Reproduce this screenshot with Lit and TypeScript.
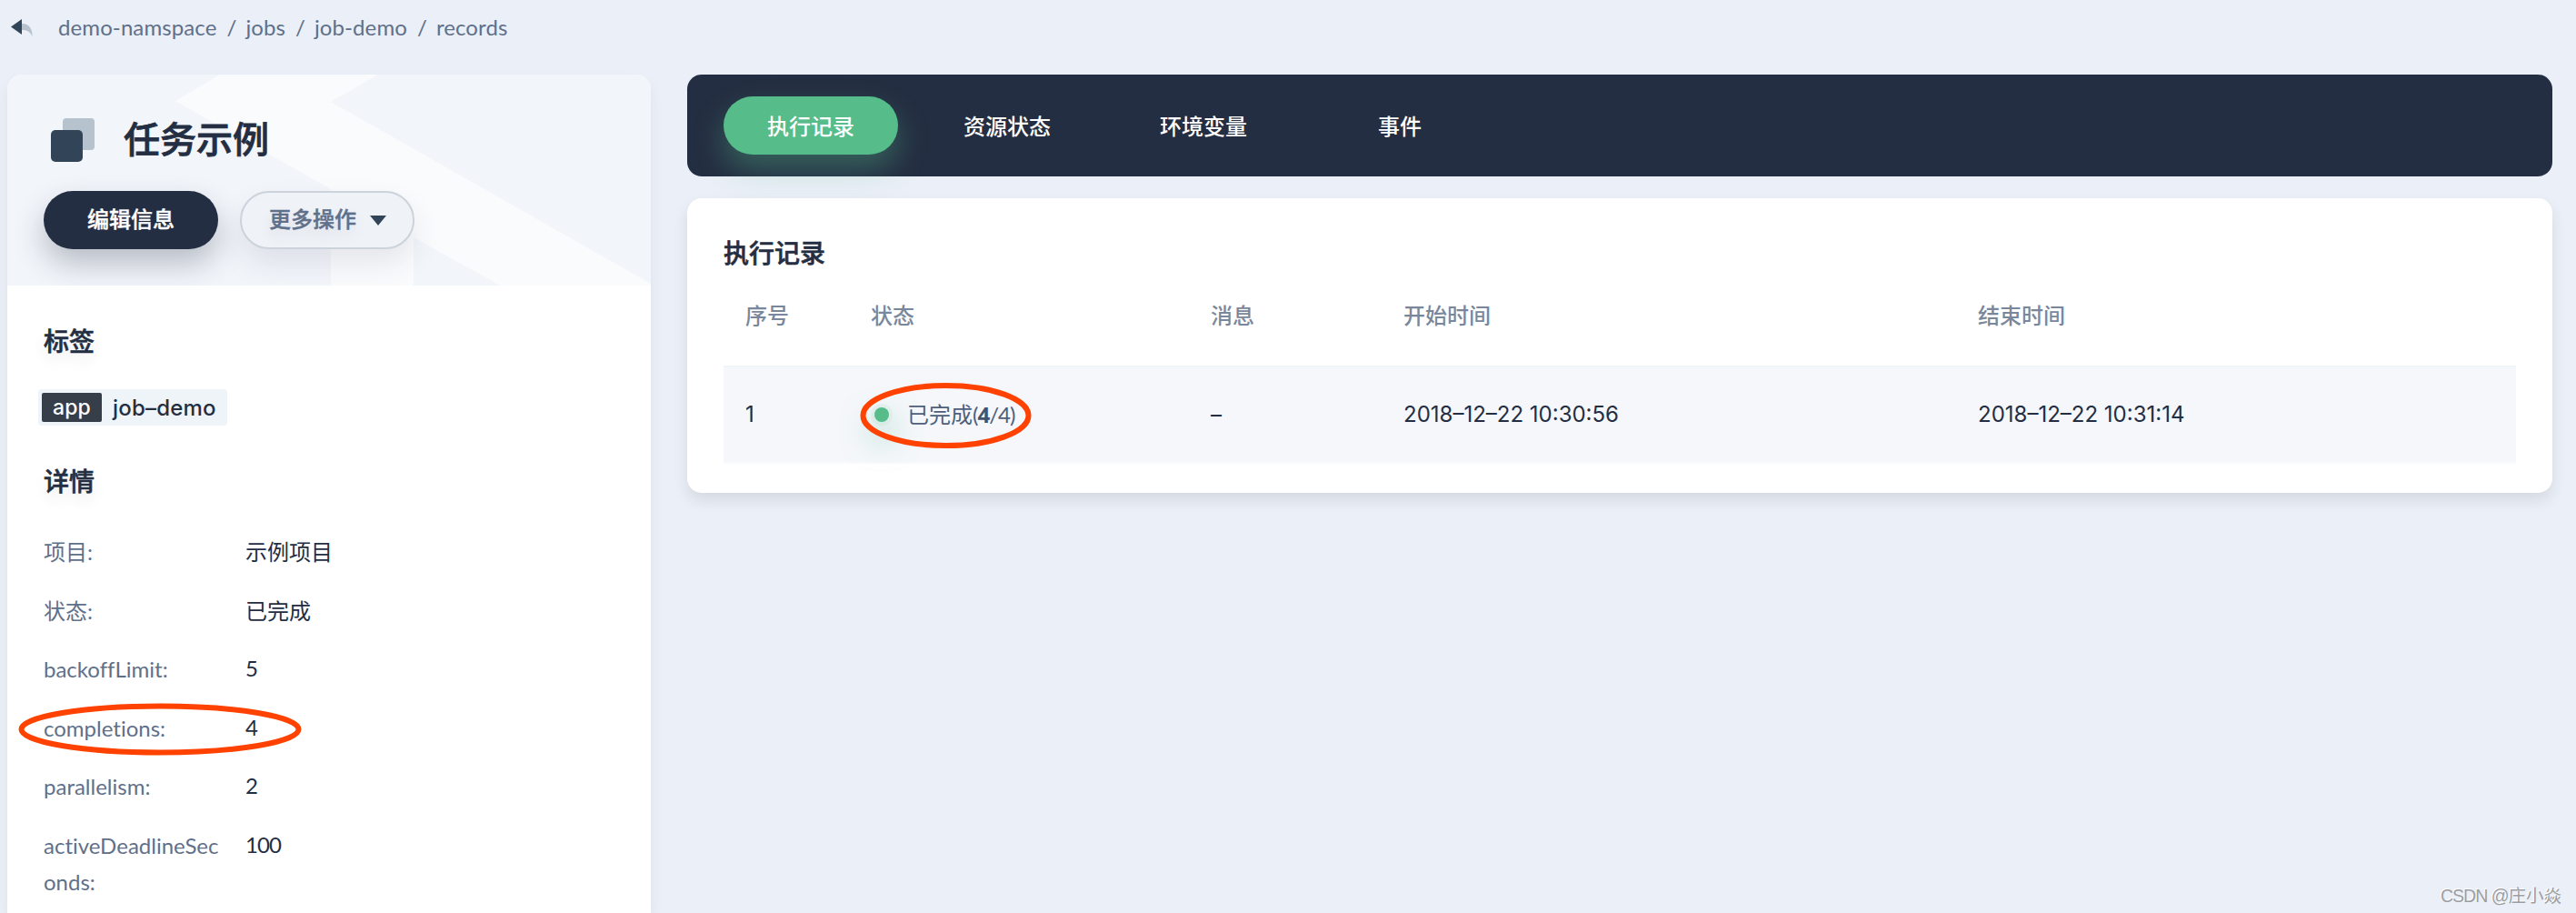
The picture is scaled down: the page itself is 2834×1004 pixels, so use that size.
import { LitElement, html, svg, css } from "lit";
import { customElement } from "lit/decorators.js";

const CRUMBS = ["demo-namspace", "jobs", "job-demo", "records"];
const TABS = ["执行记录", "资源状态", "环境变量", "事件"];
const DETAILS: { label: string; value: string; numeric?: boolean; marked?: boolean }[] = [
  { label: "项目:", value: "示例项目" },
  { label: "状态:", value: "已完成" },
  { label: "backoffLimit:", value: "5", numeric: true },
  { label: "completions:", value: "4", numeric: true, marked: true },
  { label: "parallelism:", value: "2", numeric: true },
  { label: "activeDeadlineSeconds:", value: "100", numeric: true },
];

@customElement("job-side-panel")
class JobSidePanel extends LitElement {
  static styles = css`
    :host { display: block; width: 708px; flex: none; }
    * { box-sizing: border-box; }
    .panel {
      height: 100%;
      background: #fff;
      border-radius: 16px 16px 0 0;
      box-shadow: 0 8px 16px rgba(36, 46, 66, 0.06);
    }
    .head {
      position: relative;
      height: 232px;
      padding: 48px 40px 0;
      background: #f2f5fa;
      border-radius: 16px 16px 0 0;
      overflow: hidden;
    }
    .backdrop { position: absolute; left: 0; top: 0; }
    .title-row { position: relative; display: flex; align-items: center; height: 48px; padding-left: 8px; }
    .title { margin: -2px 0 0 32px; font-size: 40px; line-height: 48px; font-weight: 500; -webkit-text-stroke: 0.8px #242e42; color: #242e42; }
    .buttons { position: relative; display: flex; gap: 24px; margin-top: 32px; }
    .btn {
      display: flex; align-items: center; justify-content: center;
      width: 192px; height: 64px; border-radius: 32px; padding-bottom: 2px;
      font-size: 24px; font-weight: 500; line-height: 36px; -webkit-text-stroke: 0.4px currentColor;
    }
    .primary { background: #242e42; color: #fff; box-shadow: 0 16px 32px rgba(36, 46, 66, 0.28); }
    .plain {
      background: #eff2f7; color: #5f708a; border: 2px solid #ccd3db; gap: 15px; padding-left: 1px;
      box-shadow: 0 16px 32px rgba(36, 46, 66, 0.1);
      text-shadow: 0 8px 16px rgba(36, 46, 66, 0.1);
    }
    .caret { margin-top: 2px; }
    .body { padding: 41px 40px 0; }
    .h { margin: 0; font-size: 28px; line-height: 40px; font-weight: 500; -webkit-text-stroke: 0.6px #242e42; color: #242e42; text-shadow: 0 8px 16px rgba(35, 45, 65, 0.1); }
    .tag {
      display: inline-flex; align-items: center; height: 40px; margin: 33px 0 0 -6px; padding: 0 12px 0 4px;
      background: #eff4f9; border-radius: 4px; vertical-align: top;
      font-family: Inter, "Liberation Sans", sans-serif; font-size: 24px; font-weight: 500; letter-spacing: 0.2px; color: #242e42;
    }
    .key { display: flex; align-items: center; justify-content: center; width: 66px; height: 32px; margin-right: 12px; border-radius: 2px; background: #363e4a; color: #fff; font-size: 23px; }
    .h.second { margin-top: 41px; }
    .list { margin: 38px 0 0; font-variant-ligatures: none; }
    .item { position: relative; display: flex; font-size: 24px; line-height: 40px; margin-bottom: 24.5px; }
    .label { width: 200px; margin-right: 22px; color: #5f708a; word-break: break-all; }
    .value { color: #242e42; }
    .value.num { margin-top: -1px; letter-spacing: -0.9px; }
    .mark { position: absolute; left: -28px; top: -8px; }
  `;

  render() {
    return html`
      <div class="panel">
        <div class="head">
          <svg class="backdrop" width="708" height="232" viewBox="0 0 708 232">
            <path d="M234 0H408L356 30L708 230V232H542L447 179V232H356V126L185 29Z" fill="#fafbfd" />
          </svg>
          <div class="title-row">
            <svg width="48" height="48" viewBox="0 0 48 48">
              <rect x="13" y="0" width="35" height="35" rx="4" fill="#b6c2cd" />
              <rect x="0" y="13" width="35" height="35" rx="5" fill="#324558" />
            </svg>
            <h1 class="title">任务示例</h1>
          </div>
          <div class="buttons">
            <div class="btn primary">编辑信息</div>
            <div class="btn plain">
              <span>更多操作</span>
              <svg class="caret" width="18" height="11" viewBox="0 0 18 11"><path d="M0 0H18L9 11Z" fill="#324558" /></svg>
            </div>
          </div>
        </div>
        <div class="body">
          <h2 class="h">标签</h2>
          <div class="tag"><span class="key">app</span><span>job–demo</span></div>
          <h2 class="h second">详情</h2>
          <div class="list">
            ${DETAILS.map(
              (d) => html`<div class="item">
                <span class="label">${d.label}</span><span class="value ${d.numeric ? "num" : ""}">${d.value}</span>
                ${d.marked
                  ? html`<svg class="mark" width="312" height="58" viewBox="0 0 312 58">
                      ${svg`<ellipse cx="156" cy="29" rx="152.5" ry="25.5" fill="none" stroke="#ff4200" stroke-width="6" />`}
                    </svg>`
                  : ""}
              </div>`
            )}
          </div>
        </div>
      </div>
    `;
  }
}

@customElement("job-records")
class JobRecords extends LitElement {
  static styles = css`
    :host { display: block; flex: none; width: 2052px; }
    * { box-sizing: border-box; }
    .tabs { display: flex; gap: 24px; height: 112px; padding: 24px 40px; border-radius: 16px; background: #242e42; }
    .tab {
      display: flex; align-items: center; justify-content: center; width: 192px; height: 64px; padding-bottom: 1px;
      border-radius: 32px; color: #fff; font-size: 24px; font-weight: 500;
    }
    .tab.active { background: #55bc8a; box-shadow: 0 16px 32px rgba(85, 188, 138, 0.36); }
    .card {
      margin-top: 24px; height: 324px; padding: 40px; border-radius: 16px; background: #fff;
      box-shadow: 0 8px 16px rgba(36, 46, 66, 0.11);
    }
    .title { margin: 0; font-size: 28px; line-height: 40px; font-weight: 500; -webkit-text-stroke: 0.6px #242e42; color: #242e42; }
    .row { display: grid; grid-template-columns: 138px 374px 212px 632px 1fr; align-items: center; padding-left: 24px; }
    .header { height: 98px; margin-top: 6px; padding-bottom: 16px; font-size: 24px; font-weight: 500; color: #79879c; }
    .data {
      height: 108px; padding-bottom: 1px; background: #f5f7fb; border-top: 2px solid #eff4f9; border-bottom: 2px solid #f9fbfd;
      font-family: Inter, "Noto Sans CJK SC", sans-serif; font-size: 24px; color: #242e42;
    }
    .status {
      position: relative; display: flex; align-items: center; color: #4e5f7c;
      font-family: Lato, "Noto Sans CJK SC", sans-serif;
    }
    .status-text { margin-top: -3px; }
    .count { letter-spacing: -1px; }
    .dot {
      width: 16px; height: 16px; margin: 0 20px 0 4px; border-radius: 50%; background: #55bc8a;
      box-shadow: 0 0 0 4px rgba(85, 188, 138, 0.08), 0 16px 32px 4px rgba(85, 188, 138, 0.5);
    }
    .strong { color: #42546b; font-family: "Noto Sans", Lato, sans-serif; font-weight: 700; }
    .mark { position: absolute; left: -12px; top: -20px; }
  `;

  render() {
    return html`
      <div class="tabs">
        ${TABS.map((t, i) => html`<div class="tab ${i === 0 ? "active" : ""}">${t}</div>`)}
      </div>
      <div class="card">
        <h2 class="title">执行记录</h2>
        <div class="row header">
          <span>序号</span><span>状态</span><span>消息</span><span>开始时间</span><span>结束时间</span>
        </div>
        <div class="row data">
          <span>1</span>
          <span class="status">
            <i class="dot"></i><span class="status-text">已完成<span class="count">(<b class="strong">4</b>/4)</span></span>
            <svg class="mark" width="190" height="74" viewBox="0 0 190 74">
              <ellipse cx="94.500" cy="37" rx="91" ry="33" fill="none" stroke="#ff4200" stroke-width="6" />
            </svg>
          </span>
          <span>–</span>
          <span>2018–12–22 10:30:56</span>
          <span>2018–12–22 10:31:14</span>
        </div>
      </div>
    `;
  }
}

@customElement("app-root")
class AppRoot extends LitElement {
  static styles = css`
    :host {
      display: block; height: 1004px; overflow: hidden; position: relative; background: #ebeff7;
      font-family: Lato, "Noto Sans CJK SC", sans-serif;
    }
    * { box-sizing: border-box; }
    .crumbs { display: flex; align-items: center; height: 82px; padding: 0 0 24px 12px; color: #5f708a; font-size: 24px; letter-spacing: 0.1px; }
    .back { margin-right: 28px; }
    .sep { margin: 0 10px 0 11px; }
    .main { display: flex; gap: 40px; height: 922px; padding-left: 8px; }
    .watermark {
      position: absolute; right: 16px; bottom: 5px; font-family: "Liberation Sans", "Noto Sans CJK SC", sans-serif;
      font-size: 19.5px; line-height: 28px; color: #9b9ea3; text-shadow: -1px -1px 0 #fff;
    }
    .site { letter-spacing: -1px; }
  `;

  render() {
    return html`
      <nav class="crumbs">
        <svg class="back" width="24" height="22" viewBox="0 0 24 22">
          <path d="M11 8C19 7 24 13 23.500 22C21 17 18 14.500 11 15Z" fill="#b6c2cd" />
          <path d="M12 3V20L0 11.500Z" fill="#324558" />
        </svg>
        ${CRUMBS.map((c, i) => html`${i ? html`<span class="sep">/</span>` : ""}<span>${c}</span>`)}
      </nav>
      <div class="main">
        <job-side-panel></job-side-panel>
        <job-records></job-records>
      </div>
      <div class="watermark"><span class="site">CSDN @</span>庄小焱</div>
    `;
  }
}
